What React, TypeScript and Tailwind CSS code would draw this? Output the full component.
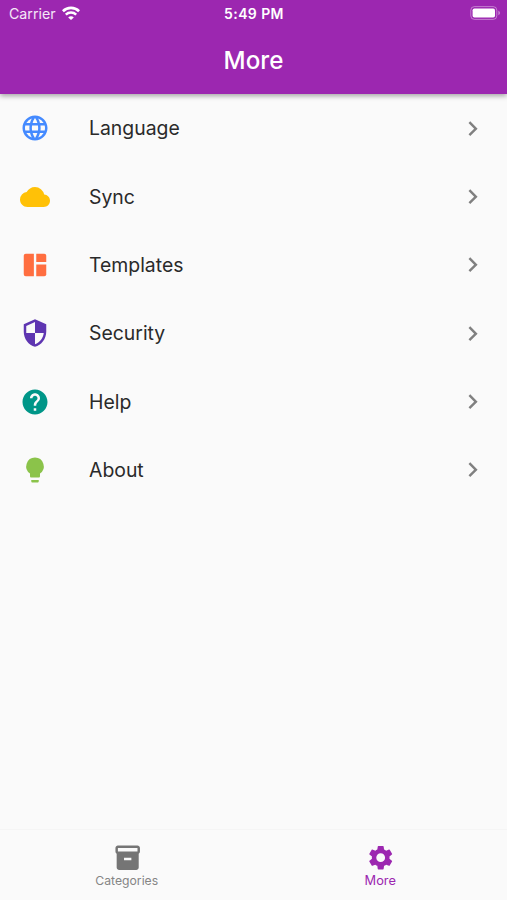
import type { ReactNode } from "react";
import {
  MdChevronRight,
  MdCloud,
  MdHelp,
  MdInventory2,
  MdLanguage,
  MdSecurity,
  MdSettings,
} from "react-icons/md";

function WifiIcon() {
  return (
    <svg viewBox="0 0 18 14" className="h-[14px] w-[18px]" fill="none" stroke="currentColor">
      <path d="M.9 5.2a11.5 11.5 0 0 1 16.2 0" strokeWidth="2.7" />
      <path d="M3.8 8.7a7.4 7.4 0 0 1 10.4 0" strokeWidth="2.4" />
      <path d="M9 14 6.2 11.4a3.9 3.9 0 0 1 5.6 0z" fill="currentColor" stroke="none" />
    </svg>
  );
}

function BatteryIcon() {
  return (
    <svg viewBox="0 0 31 14" className="h-[14px] w-[31px]" fill="none">
      <rect x="0.8" y="0.6" width="26" height="12.8" rx="3.6" stroke="white" strokeOpacity="0.4" />
      <rect x="2.6" y="2.4" width="22.4" height="9.2" rx="1.8" fill="white" />
      <path d="M28.3 4.8v4.4c1.1-.4 1.8-1.2 1.8-2.2s-.7-1.8-1.8-2.2z" fill="white" fillOpacity="0.4" />
    </svg>
  );
}

function TemplatesIcon() {
  return (
    <svg viewBox="0 0 24 24" fill="currentColor" className="size-full">
      <path d="M11.1 21H4.6A1.6 1.6 0 0 1 3 19.4V4.6A1.6 1.6 0 0 1 4.6 3h6.5z" />
      <path d="M13 3h6.4A1.6 1.6 0 0 1 21 4.6v5h-8z" />
      <path d="M13 11.5h8v7.9a1.6 1.6 0 0 1-1.6 1.6H13z" />
    </svg>
  );
}

function BulbIcon() {
  return (
    <svg viewBox="0 0 24 24" fill="currentColor" className="size-full">
      <path d="M9 21c0 .55.45 1 1 1h4c.55 0 1-.45 1-1v-1H9v1zm3-19a7 7 0 0 0-4 12.74V17c0 .55.45 1 1 1h6c.55 0 1-.45 1-1v-2.26A7 7 0 0 0 12 2z" />
    </svg>
  );
}

type Item = { label: string; color: string; icon: ReactNode };

const items: Item[] = [
  { label: "Language", color: "text-[#448aff]", icon: <MdLanguage className="size-full" /> },
  { label: "Sync", color: "text-[#ffc107]", icon: <MdCloud className="size-full" /> },
  { label: "Templates", color: "text-[#ff6e40]", icon: <TemplatesIcon /> },
  { label: "Security", color: "text-[#5e35b1]", icon: <MdSecurity className="size-full" /> },
  { label: "Help", color: "text-[#009688]", icon: <MdHelp className="size-full" /> },
  { label: "About", color: "text-[#8bc34a]", icon: <BulbIcon /> },
];

function Header() {
  return (
    <header className="z-10 h-[94px] shrink-0 bg-[#9c27b0] text-white shadow-[0_2px_5px_rgba(0,0,0,0.35)]">
      <div className="grid h-[26px] grid-cols-3 items-center pr-[6px] pl-[9px]">
        <div className="flex items-center gap-[6px]">
          <span className="pt-px text-[14.2px] text-white/90">Carrier</span>
          <WifiIcon />
        </div>
        <span className="pt-px pr-[2px] text-center text-[14px] font-semibold tracking-[0.4px]">5:49 PM</span>
        <div className="flex justify-end">
          <BatteryIcon />
        </div>
      </div>
      <h1 className="flex h-[68px] items-center justify-center pt-[2px] text-[24.2px] font-medium">More</h1>
    </header>
  );
}

export default function App() {
  return (
    <div className="flex h-[900px] w-full flex-col overflow-hidden bg-[#fafafa] font-['Inter',sans-serif]">
      <Header />
      <main className="flex-1">
        <ul>
          {items.map((item) => (
            <li key={item.label} className="flex h-[68.4px] items-center pr-[20px] pl-[20px]">
              <span className={`size-[30px] shrink-0 ${item.color}`}>{item.icon}</span>
              <span className="ml-[39px] flex-1 pt-px text-[19.4px] text-[#2a2a2a]">{item.label}</span>
              <MdChevronRight className="size-[29.4px] text-[#808080]" />
            </li>
          ))}
        </ul>
      </main>
      <nav className="flex h-[71px] shrink-0 border-t border-[#f5f5f5]">
        <a href="#categories" className="flex flex-1 flex-col items-center pt-[13.3px] text-[#757575]">
          <MdInventory2 className="ml-px size-[29.4px]" />
          <span className="pt-[0.7px] text-[12.2px] leading-[16px] text-[#858585]">Categories</span>
        </a>
        <a href="#more" className="flex flex-1 flex-col items-center pt-[13.3px] text-[#9c27b0]">
          <MdSettings className="size-[29.4px]" />
          <span className="pt-[0.7px] text-[12.8px] leading-[16px]">More</span>
        </a>
      </nav>
    </div>
  );
}
